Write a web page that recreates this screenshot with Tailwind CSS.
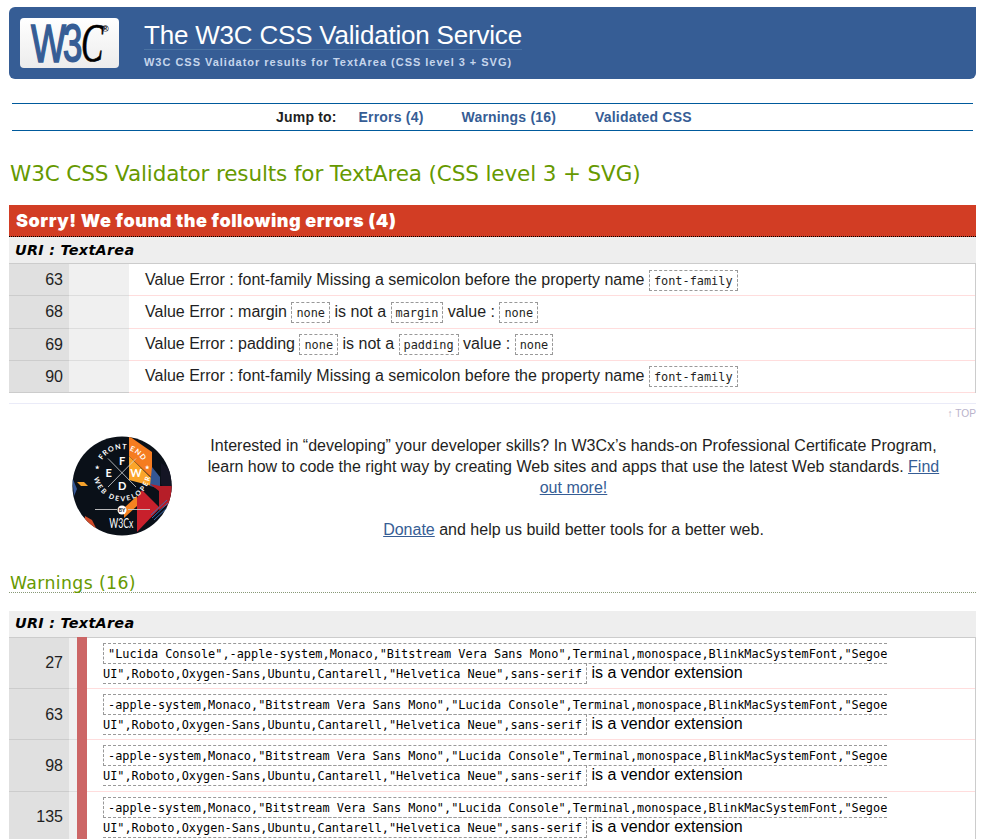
<!DOCTYPE html>
<html lang="en">
<head>
<meta charset="utf-8">
<title>W3C CSS Validator results for TextArea</title>
<script src="https://cdn.jsdelivr.net/npm/@tailwindcss/browser@4"></script>
</head>
<body class="h-[839px] overflow-hidden bg-white pl-[9px] pr-2 pt-[7px] font-['Liberation_Sans',Arial,sans-serif] text-base leading-[21px] text-[#1f1f23]">
<header class="flex h-[72px] rounded-md rounded-tr-none bg-[#365d95] pl-[11px] pt-[11px]">
  <svg class="h-[50px] w-[99px] shrink-0 overflow-visible" viewBox="0 0 99 50">
    <defs><linearGradient id="lg" x1="0" y1="0" x2="0" y2="1"><stop offset="0" stop-color="#fff"/><stop offset="1" stop-color="#ececec"/></linearGradient></defs>
    <rect width="99" height="50" rx="4" fill="url(#lg)"/>
    <g font-family="Liberation Sans, Arial, sans-serif">
      <text transform="translate(11 43.5) scale(.7 1)" font-size="53" fill="#365d95" stroke="#365d95" stroke-width="1.6">W</text>
      <text transform="translate(43 43.2) scale(.68 1)" font-size="51" fill="#365d95" stroke="#365d95" stroke-width="1.8">3</text>
      <text transform="translate(61 43.2) scale(.62 1)" font-size="54" font-family="Liberation Serif, serif" font-style="italic" fill="#000" stroke="#000" stroke-width=".6">C</text>
      <text x="82" y="13.5" font-size="9" font-weight="bold" fill="#000">®</text>
    </g>
  </svg>
  <div class="ml-[25px] flex flex-col items-start">
    <h1 class="h-8 whitespace-nowrap border-b border-[#4a73a3] text-[26px] leading-[34px] tracking-[-0.2px] text-white">The W3C CSS Validation Service</h1>
    <p class="mt-1 whitespace-nowrap text-[11px] font-bold leading-4 tracking-[0.98px] text-[#c6d6ec]">W3C CSS Validator results for TextArea (CSS level 3 + SVG)</p>
  </div>
</header>
<nav class="ml-[3px] mr-[3px] mt-6 flex h-7 items-center border-y border-[#005a9c] pl-[264px] text-sm font-bold leading-4 tracking-[0.2px] text-[#365d95]">
  <span class="w-[82.5px] text-[#1f1f23]">Jump to:</span><a class="w-[103px]">Errors (4)</a><a class="w-[133.5px]">Warnings (16)</a><a>Validated CSS</a>
</nav>
<h2 class="mt-[27px] h-[31px] whitespace-nowrap pl-px font-['DejaVu_Sans',Verdana,sans-serif] text-[21.5px] leading-[31px] tracking-[-0.12px] text-[#690]"><span>W3C CSS Validator results for TextArea (CSS level 3 + SVG)</span></h2>
<h3 class="mt-4 h-8 whitespace-nowrap border-b border-dotted border-black bg-[#d23d24] pl-[7px] font-['Inter','Arial_Black',sans-serif] text-[18px] font-black leading-[31px] tracking-[0.54px] text-white">Sorry! We found the following errors (4)</h3>
<h4 class="h-[27px] border-b border-[#ccc] bg-[#eee] pl-1.5 font-['DejaVu_Sans',Verdana,sans-serif] text-[14.4px] font-bold italic leading-[26px] tracking-[0.28px] text-black">URI : TextArea</h4>
<section class="border-r border-[#ccc]">
  <div class="flex h-8"><div class="w-[60px] border-b border-[#ccc] bg-[#e0e0e0] pr-1.5 text-right leading-[31px]">63</div><div class="w-[60px] border-b border-[#ddd] bg-[#f0f0f0]"></div><div class="flex-1 whitespace-nowrap border-b border-[#fdd] pl-4 leading-[31px]">Value Error : font-family Missing a semicolon before the property name <code class="border border-dashed border-[#999] px-1 py-[2.5px] align-[1px] font-['DejaVu_Sans_Mono',monospace] text-[11.88px] leading-none">font-family</code></div></div>
  <div class="flex h-[33px]"><div class="w-[60px] border-b border-[#ccc] bg-[#e0e0e0] pr-1.5 text-right leading-8">68</div><div class="w-[60px] border-b border-[#ddd] bg-[#f0f0f0]"></div><div class="flex-1 whitespace-nowrap border-b border-[#fdd] pl-4 leading-[31px]">Value Error : margin <code class="border border-dashed border-[#999] px-1 py-[2.5px] align-[1px] font-['DejaVu_Sans_Mono',monospace] text-[11.88px] leading-none">none</code> is not a <code class="border border-dashed border-[#999] px-1 py-[2.5px] align-[1px] font-['DejaVu_Sans_Mono',monospace] text-[11.88px] leading-none">margin</code> value : <code class="border border-dashed border-[#999] px-1 py-[2.5px] align-[1px] font-['DejaVu_Sans_Mono',monospace] text-[11.88px] leading-none">none</code></div></div>
  <div class="flex h-8"><div class="w-[60px] border-b border-[#ccc] bg-[#e0e0e0] pr-1.5 text-right leading-[31px]">69</div><div class="w-[60px] border-b border-[#ddd] bg-[#f0f0f0]"></div><div class="flex-1 whitespace-nowrap border-b border-[#fdd] pl-4 leading-[30px]">Value Error : padding <code class="border border-dashed border-[#999] px-1 py-[2.5px] align-[1px] font-['DejaVu_Sans_Mono',monospace] text-[11.88px] leading-none">none</code> is not a <code class="border border-dashed border-[#999] px-1 py-[2.5px] align-[1px] font-['DejaVu_Sans_Mono',monospace] text-[11.88px] leading-none">padding</code> value : <code class="border border-dashed border-[#999] px-1 py-[2.5px] align-[1px] font-['DejaVu_Sans_Mono',monospace] text-[11.88px] leading-none">none</code></div></div>
  <div class="flex h-8"><div class="w-[60px] border-b border-[#ccc] bg-[#e0e0e0] pr-1.5 text-right leading-[31px]">90</div><div class="w-[60px] border-b border-[#ccc] bg-[#f0f0f0]"></div><div class="flex-1 whitespace-nowrap border-b border-[#fdd] pl-4 leading-[30px]">Value Error : font-family Missing a semicolon before the property name <code class="border border-dashed border-[#999] px-1 py-[2.5px] align-[1px] font-['DejaVu_Sans_Mono',monospace] text-[11.88px] leading-none">font-family</code></div></div>
</section>
<div class="mt-2.5 h-8 border-t border-[#eaebf8] pt-px text-right text-[10.2px] leading-[18px] text-[#b9b3cb]">↑ TOP</div>
<section class="flex h-[135px]">
  <svg class="ml-[63px] mt-px h-[100px] w-[100px] shrink-0" viewBox="0 0 100 100">
    <defs><clipPath id="c"><circle cx="50" cy="50" r="49.6"/></clipPath><path id="arcTop" d="M29.65 24.75A23.5 23.5 0 0 1 70.35 24.75"/><path id="arcBottom" d="M21.6 39A28.5 28.5 0 0 0 78.4 39"/></defs>
    <g clip-path="url(#c)">
      <rect width="100" height="100" fill="#0a1018"/>
      <path d="M57 0L80 16V42L57 20Z" fill="#f57c20"/><path d="M57 20L80 43V50L57 44Z" fill="#fba52a"/>
      <path d="M80 31L88 41V53L78 50Z" fill="#345694"/><path d="M89 27L100 35V62L89 48Z" fill="#141524"/>
      <path d="M78 48L87 55V74L100 66V50H88Z" fill="#b61e28"/>
      <path d="M70 54L88 72L65 96V62Z" fill="#c8202c"/>
      <path d="M52 72L65 60V70L52 82Z" fill="#f58220"/>
      <path d="M5 46H12L16 50H9Z" fill="#f5a12b"/><path d="M0 41L5 53L2 60Z" fill="#345694"/>
      <path d="M13 80L20 84L26 96L12 92Z" fill="#d04a28"/>
      <path d="M79 79L95 64M80 82L96 67M82 84L97 70" stroke="#3e6cb4"/>
      <path d="M36 22.500L64 51M36 51L64 22.500" stroke="#d7d9dc" stroke-width=".8"/>
      <path d="M23 73.500H45M56 73.500H78" stroke="#ccc" stroke-width=".9"/>
      <circle cx="50" cy="74" r="4.500" fill="#fff"/>
      <g fill="#fff" font-family="Lato, sans-serif" font-weight="bold">
        <text font-size="7.200"><textPath href="#arcTop" startOffset="1" textLength="48">FRONT END</textPath></text>
        <text font-size="6.800"><textPath href="#arcBottom" startOffset="3" textLength="79">WEB DEVELOPER</textPath></text>
        <g font-size="11" text-anchor="middle"><text x="50" y="29">F</text><text x="36.700" y="40.500">E</text><text x="64" y="40.500">W</text><text x="50.300" y="53.500">D</text></g>
        <text x="50" y="76" font-size="5" fill="#111" text-anchor="middle">BY</text>
        <text x="37.300" y="92" font-size="13" font-weight="normal" textLength="24" lengthAdjust="spacingAndGlyphs">W3Cx</text>
        <text x="22.800" y="33" font-size="5">★</text><text x="72.800" y="33" font-size="5">★</text>
      </g>
    </g>
  </svg>
  <div class="ml-[35px] w-[733px] whitespace-nowrap text-center">
    <p>Interested in “developing” your developer skills? In W3Cx’s hands-on Professional Certificate Program,<br>learn how to code the right way by creating Web sites and apps that use the latest Web standards. <a class="text-[#365d95] underline">Find</a><br><a class="text-[#365d95] underline">out more!</a></p>
    <p class="mt-[21px]"><a class="text-[#365d95] underline">Donate</a> and help us build better tools for a better web.</p>
  </div>
</section>
<h3 class="h-[23px] border-b border-dotted border-[#897] pl-px font-['DejaVu_Sans',Verdana,sans-serif] text-[17.3px] leading-[26px] tracking-[0.38px] text-[#690]"><span>Warnings (16)</span></h3>
<h4 class="mt-[18px] h-[27px] border-b border-[#ccc] bg-[#eee] pl-1.5 font-['DejaVu_Sans',Verdana,sans-serif] text-[14.4px] font-bold italic leading-[25px] tracking-[0.28px] text-black">URI : TextArea</h4>
<section class="border-r border-[#ccc] text-black">
  <div class="flex h-[51px]"><div class="w-[60px] border-b border-[#ccc] bg-[#e0e0e0] pr-1.5 text-right leading-[50px] text-[#1f1f23]">27</div><div class="w-2 border-b border-[#ddd] bg-[#f0f0f0]"></div><div class="-mt-px w-2.5 bg-[#c66]"></div><div class="flex-1 whitespace-nowrap border-b border-[#fdd] pl-4 pt-[5px] leading-5"><code class="border border-dashed border-[#999] px-1 py-[2.5px] align-[1px] font-['DejaVu_Sans_Mono',monospace] text-[11.88px] leading-none">"Lucida Console",-apple-system,Monaco,"Bitstream Vera Sans Mono",Terminal,monospace,BlinkMacSystemFont,"Segoe<br>UI",Roboto,Oxygen-Sans,Ubuntu,Cantarell,"Helvetica Neue",sans-serif</code> is a vendor extension</div></div>
  <div class="flex h-[51px]"><div class="w-[60px] border-b border-[#ccc] bg-[#e0e0e0] pr-1.5 text-right leading-[52px] text-[#1f1f23]">63</div><div class="w-2 border-b border-[#ddd] bg-[#f0f0f0]"></div><div class="w-2.5 bg-[#c66]"></div><div class="flex-1 whitespace-nowrap border-b border-[#fdd] pl-4 pt-[5px] leading-5"><code class="border border-dashed border-[#999] px-1 py-[2.5px] align-[1px] font-['DejaVu_Sans_Mono',monospace] text-[11.88px] leading-none">-apple-system,Monaco,"Bitstream Vera Sans Mono","Lucida Console",Terminal,monospace,BlinkMacSystemFont,"Segoe<br>UI",Roboto,Oxygen-Sans,Ubuntu,Cantarell,"Helvetica Neue",sans-serif</code> is a vendor extension</div></div>
  <div class="flex h-[52px]"><div class="w-[60px] border-b border-[#ccc] bg-[#e0e0e0] pr-1.5 text-right leading-[52px] text-[#1f1f23]">98</div><div class="w-2 border-b border-[#ddd] bg-[#f0f0f0]"></div><div class="w-2.5 bg-[#c66]"></div><div class="flex-1 whitespace-nowrap border-b border-[#fdd] pl-4 pt-[5px] leading-5"><code class="border border-dashed border-[#999] px-1 py-[2.5px] align-[1px] font-['DejaVu_Sans_Mono',monospace] text-[11.88px] leading-none">-apple-system,Monaco,"Bitstream Vera Sans Mono","Lucida Console",Terminal,monospace,BlinkMacSystemFont,"Segoe<br>UI",Roboto,Oxygen-Sans,Ubuntu,Cantarell,"Helvetica Neue",sans-serif</code> is a vendor extension</div></div>
  <div class="flex h-[51px]"><div class="w-[60px] border-b border-[#ccc] bg-[#e0e0e0] pr-1.5 text-right leading-[50px] text-[#1f1f23]">135</div><div class="w-2 border-b border-[#ddd] bg-[#f0f0f0]"></div><div class="w-2.5 bg-[#c66]"></div><div class="flex-1 whitespace-nowrap border-b border-[#fdd] pl-4 pt-[5px] leading-5"><code class="border border-dashed border-[#999] px-1 py-[2.5px] align-[1px] font-['DejaVu_Sans_Mono',monospace] text-[11.88px] leading-none">-apple-system,Monaco,"Bitstream Vera Sans Mono","Lucida Console",Terminal,monospace,BlinkMacSystemFont,"Segoe<br>UI",Roboto,Oxygen-Sans,Ubuntu,Cantarell,"Helvetica Neue",sans-serif</code> is a vendor extension</div></div>
</section>
</body>
</html>
